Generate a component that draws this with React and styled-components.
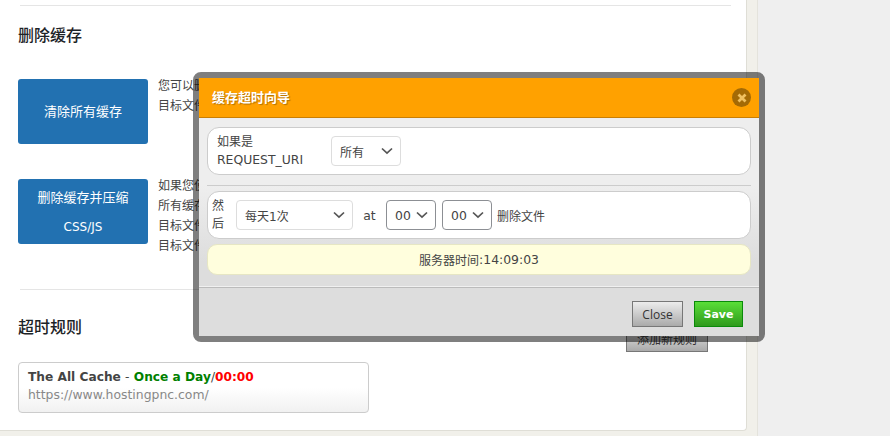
import React from 'react';
import styled, { createGlobalStyle } from 'styled-components';

const GlobalStyle = createGlobalStyle`
  html, body {
    margin: 0;
    padding: 0;
    height: 436px;
    overflow: hidden;
    background: #efefef;
    font-family: "DejaVu Sans", "Noto Sans CJK SC", sans-serif;
    font-size: 12px;
    color: #444;
  }
`;

const Chevron = ({ color = '#555' }) => (
  <ChevronSvg viewBox="0 0 12 8" fill="none" stroke={color} strokeWidth="1.7">
    <path d="M1 1.5 L6 6.2 L11 1.5" />
  </ChevronSvg>
);

const App = () => (
  <>
    <GlobalStyle />
    <Page>
      <Rail>
        <Panel>
          <Rule />
          <Heading>删除缓存</Heading>
          <ActionRow>
            <BlueButton>清除所有缓存</BlueButton>
            <Notes>
              <p>您可以删除所有缓存文件</p>
              <p>目标文件夹</p>
            </Notes>
          </ActionRow>
          <ActionRow $second>
            <BlueButton $stacked>
              <span>删除缓存并压缩</span>
              <SmallLatin>CSS/JS</SmallLatin>
            </BlueButton>
            <Notes>
              <p>如果您使用压缩</p>
              <p>所有缓存文件</p>
              <p>目标文件夹</p>
              <p>目标文件夹</p>
            </Notes>
          </ActionRow>
          <Rule $low />
          <TitleRow>
            <Heading $flat>超时规则</Heading>
            <GreyButton $add>添加新规则</GreyButton>
          </TitleRow>
          <RuleCard>
            <RuleTitle>
              The All Cache <Thin>-</Thin> <Green>Once a Day</Green>
              <Thin>/</Thin>
              <Red>00:00</Red>
            </RuleTitle>
            <RuleUrl>https://www.hostingpnc.com/</RuleUrl>
          </RuleCard>
        </Panel>
      </Rail>

      <Modal>
        <ModalHeader>
          <ModalTitle>缓存超时向导</ModalTitle>
          <CloseIcon>
            <svg width="10" height="10" viewBox="0 0 10 10">
              <path d="M1.5 1.5 L8.5 8.5 M8.5 1.5 L1.5 8.5" stroke="#f0c060" strokeWidth="2.8" />
            </svg>
          </CloseIcon>
        </ModalHeader>
        <ModalBody>
          <Box $if>
            <IfLabel>
              如果是
              <br />
              <Latin>REQUEST_URI</Latin>
            </IfLabel>
            <Select $width="70px">
              所有
              <Chevron />
            </Select>
          </Box>
          <Divider />
          <Box>
            <ThenLabel>
              然<br />后
            </ThenLabel>
            <Select $width="117px" $gap="12px">
              每天1次
              <Chevron />
            </Select>
            <At>at</At>
            <Select $width="50px" $dark>
              <Latin>00</Latin>
              <Chevron />
            </Select>
            <Select $width="50px" $dark $gap="6px">
              <Latin>00</Latin>
              <Chevron />
            </Select>
            <Suffix>删除文件</Suffix>
          </Box>
          <ServerTime>
            服务器时间<Latin>:14:09:03</Latin>
          </ServerTime>
        </ModalBody>
        <ModalFooter>
          <GreyButton>Close</GreyButton>
          <SaveButton>Save</SaveButton>
        </ModalFooter>
      </Modal>
    </Page>
  </>
);

const Page = styled.div`
  position: relative;
  width: 890px;
  height: 436px;
  overflow: hidden;
`;

const Rail = styled.div`
  width: 746px;
  height: 431px;
  padding-right: 11px;
  padding-bottom: 5px;
  background: #f1f0ea;
  border-right: 1px solid #e4e3dc;
`;

const Panel = styled.div`
  box-sizing: border-box;
  width: 747px;
  height: 431px;
  padding: 5px 0 0 18px;
  background: #fff;
  border-right: 1px solid #dfded6;
  border-bottom: 1px solid #dfded6;
  border-bottom-right-radius: 4px;
`;

const Rule = styled.div`
  width: 711px;
  margin-left: 2px;
  height: 1px;
  background: #e5e5e5;
  margin-top: ${(p) => (p.$low ? '33px' : '0')};
`;

const Heading = styled.h3`
  margin: ${(p) => (p.$flat ? '0' : '20px 0 33px')};
  font-size: 16px;
  line-height: 20px;
  font-weight: 500;
  color: #1d2327;
`;

const ActionRow = styled.div`
  display: flex;
  gap: 10px;
  margin-top: ${(p) => (p.$second ? '35px' : '0')};
`;

const BlueButton = styled.div`
  flex: none;
  box-sizing: border-box;
  width: 130px;
  height: 65px;
  padding-top: ${(p) => (p.$stacked ? '10px' : '0')};
  display: flex;
  flex-direction: column;
  align-items: center;
  justify-content: ${(p) => (p.$stacked ? 'flex-start' : 'center')};
  gap: ${(p) => (p.$stacked ? '11px' : '0')};
  background: #2271b1;
  border-radius: 3px;
  color: #fff;
  font-size: 13px;
  line-height: 18px;
`;

const SmallLatin = styled.span`
  font-size: 12px;
`;

const Notes = styled.div`
  margin-top: -3px;
  p {
    margin: 0;
    font-size: 12px;
    line-height: 20px;
    color: #444;
  }
`;

const TitleRow = styled.div`
  display: flex;
  align-items: flex-start;
  justify-content: space-between;
  width: 690px;
  margin-top: 28px;
`;

const RuleCard = styled.div`
  box-sizing: border-box;
  width: 351px;
  height: 51px;
  margin-top: 10px;
  padding: 6px 9px;
  border: 1px solid #ccc;
  border-radius: 4px;
  background: linear-gradient(#fff 50%, #f1f1f1);
`;

const RuleTitle = styled.div`
  font-size: 12.2px;
  line-height: 17px;
  font-weight: 700;
  color: #444;
`;

const Thin = styled.span`
  font-weight: 400;
`;

const Green = styled.span`
  color: #008000;
`;

const Red = styled.span`
  color: #f00;
`;

const RuleUrl = styled.div`
  font-size: 12.4px;
  line-height: 17px;
  color: #888;
`;

const Latin = styled.span`
  font-size: 12.4px;
`;

const Modal = styled.div`
  position: absolute;
  left: 193px;
  top: 72px;
  box-sizing: border-box;
  width: 572px;
  height: 270px;
  border: 6px solid rgba(0, 0, 0, 0.5);
  border-radius: 8px;
  background-clip: padding-box;
  display: flex;
  flex-direction: column;
`;

const ModalHeader = styled.div`
  flex: none;
  box-sizing: border-box;
  height: 40px;
  display: flex;
  align-items: center;
  justify-content: space-between;
  padding: 0 8px 0 13px;
  background: #ffa100;
  border-bottom: 1px solid #c97f05;
`;

const ModalTitle = styled.div`
  color: #fff;
  font-size: 13px;
  font-weight: 700;
  margin-top: -2px;
  text-shadow: 1px 1px 1px rgba(0, 0, 0, 0.3);
`;

const CloseIcon = styled.div`
  width: 19px;
  height: 19px;
  border-radius: 50%;
  background: #a46a05;
  display: flex;
  align-items: center;
  justify-content: center;
`;

const ModalBody = styled.div`
  flex: none;
  box-sizing: border-box;
  height: 170px;
  padding: 9px 8px 0;
  background: linear-gradient(#eeeeee 40%, #dddddd 85%);
  border-bottom: 1px solid #bbb;
  box-shadow: inset 0 -1px 0 #f0f0f0;
`;

const Box = styled.div`
  box-sizing: border-box;
  height: 48px;
  display: flex;
  align-items: center;
  background: #fff;
  border: 1px solid #ccc;
  border-radius: 12px;
  padding-left: ${(p) => (p.$if ? '9px' : '4px')};
`;

const IfLabel = styled.div`
  width: 114px;
  font-size: 12px;
  line-height: 18px;
  color: #444;
`;

const ThenLabel = styled.div`
  font-size: 12px;
  line-height: 18px;
  color: #444;
`;

const Select = styled.div`
  box-sizing: border-box;
  width: ${(p) => p.$width};
  height: 30px;
  margin-left: ${(p) => p.$gap || '0'};
  display: flex;
  align-items: center;
  justify-content: space-between;
  padding: 0 7px 0 8px;
  background: #fff;
  border: 1px solid ${(p) => (p.$dark ? '#8c8f94' : '#ddd')};
  border-radius: 4px;
  font-size: 12px;
  color: #444;
`;

const ChevronSvg = styled.svg`
  width: 12px;
  height: 8px;
  flex: none;
`;

const At = styled.div`
  width: 33px;
  text-align: center;
  font-size: 12.4px;
  color: #444;
`;

const Suffix = styled.div`
  margin-left: 5px;
  font-size: 12px;
  color: #444;
`;

const Divider = styled.div`
  height: 1px;
  margin: 10px 0 5px;
  background: #ccc;
`;

const ServerTime = styled.div`
  box-sizing: border-box;
  height: 31px;
  margin-top: 5px;
  display: flex;
  align-items: center;
  justify-content: center;
  background: #fffedd;
  border: 1px solid #e6e6c4;
  border-radius: 10px;
  font-size: 12px;
  color: #444;
`;

const ModalFooter = styled.div`
  flex: 1;
  display: flex;
  align-items: flex-start;
  justify-content: flex-end;
  gap: 11px;
  padding: 13px 16px 0 0;
  background: #ddd;
`;

const GreyButton = styled.div`
  box-sizing: border-box;
  width: ${(p) => (p.$add ? '82px' : '51px')};
  height: 26px;
  margin-top: ${(p) => (p.$add ? '8px' : '0')};
  display: flex;
  align-items: center;
  justify-content: center;
  background: linear-gradient(#ececec, #aaa);
  border: 1px solid #777;
  font-family: "Open Sans", "Noto Sans CJK SC", sans-serif;
  font-size: 12px;
  color: #333;
`;

const SaveButton = styled.div`
  box-sizing: border-box;
  width: 49px;
  height: 26px;
  display: flex;
  align-items: center;
  justify-content: center;
  background: linear-gradient(#5ade38, #2f9a1c);
  border: 1px solid #0a8a0a;
  font-size: 11px;
  font-weight: 700;
  color: #fff;
`;

export default App;
